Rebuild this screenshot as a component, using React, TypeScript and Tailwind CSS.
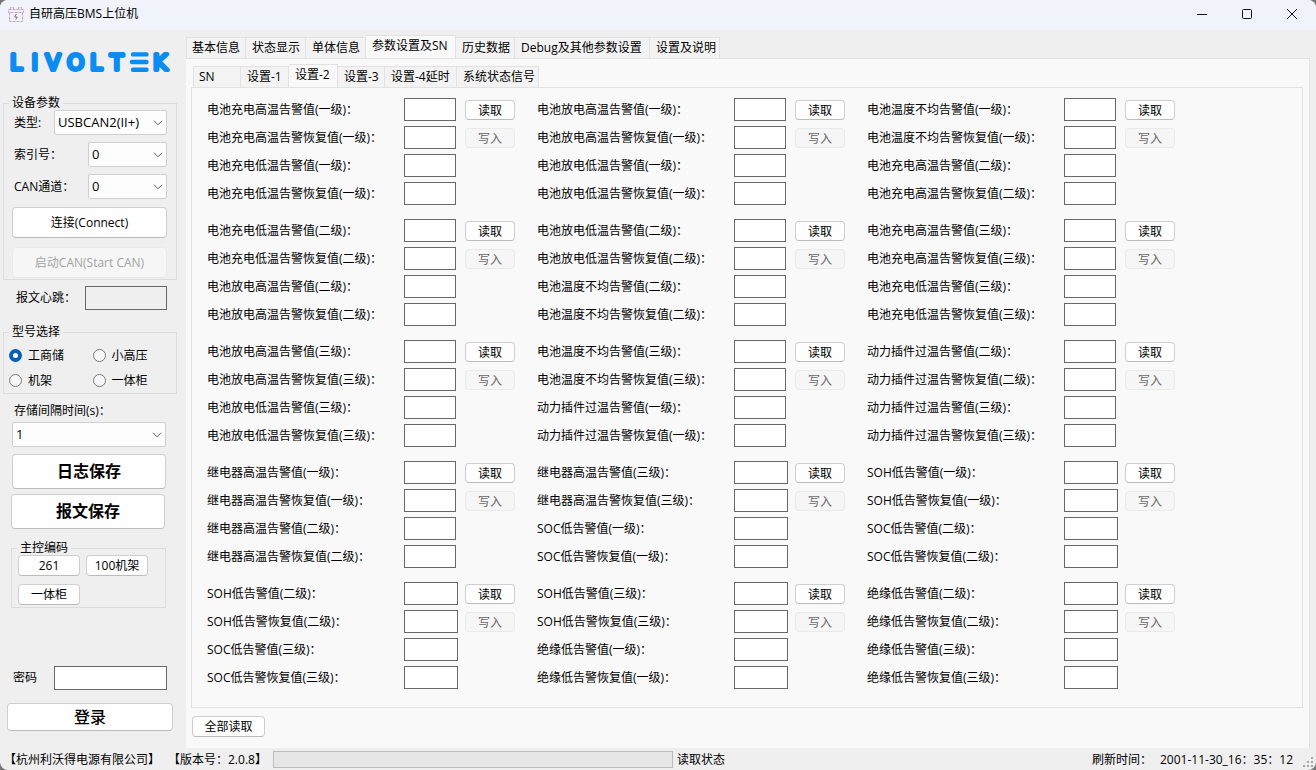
import { useId } from "react";
import type { ReactNode } from "react";

type Tab = { label: string; width: string };

const mainTabs: Tab[] = [
  { label: "基本信息", width: "w-[60px]" },
  { label: "状态显示", width: "w-[60px]" },
  { label: "单体信息", width: "w-[60px]" },
  { label: "参数设置及SN", width: "w-[90px]" },
  { label: "历史数据", width: "w-[59px]" },
  { label: "Debug及其他参数设置", width: "w-[135px]" },
  { label: "设置及说明", width: "w-[70px]" },
];

const subTabs: Tab[] = [
  { label: "SN", width: "w-[48px]" },
  { label: "设置-1", width: "w-[48px]" },
  { label: "设置-2", width: "w-[49px]" },
  { label: "设置-3", width: "w-[47px]" },
  { label: "设置-4延时", width: "w-[72px]" },
  { label: "系统状态信号", width: "w-[82px]" },
];

type Group = { rows: string[]; wide?: boolean };

const pair = (name: string, level: string) => [
  `${name}告警值(${level}级)：`,
  `${name}告警恢复值(${level}级)：`,
];

const groups: Group[] = [
  { rows: [...pair("电池充电高温", "一"), ...pair("电池充电低温", "一")] },
  { rows: [...pair("电池放电高温", "一"), ...pair("电池放电低温", "一")] },
  { rows: [...pair("电池温度不均", "一"), ...pair("电池充电高温", "二")] },
  { rows: [...pair("电池充电低温", "二"), ...pair("电池放电高温", "二")] },
  { rows: [...pair("电池放电低温", "二"), ...pair("电池温度不均", "二")] },
  { rows: [...pair("电池充电高温", "三"), ...pair("电池充电低温", "三")] },
  { rows: [...pair("电池放电高温", "三"), ...pair("电池放电低温", "三")] },
  { rows: [...pair("电池温度不均", "三"), ...pair("动力插件过温", "一")] },
  { rows: [...pair("动力插件过温", "二"), ...pair("动力插件过温", "三")] },
  { rows: [...pair("继电器高温", "一"), ...pair("继电器高温", "二")] },
  { rows: [...pair("继电器高温", "三"), ...pair("SOC低", "一")], wide: true },
  { rows: [...pair("SOH低", "一"), ...pair("SOC低", "二")], wide: true },
  { rows: [...pair("SOH低", "二"), ...pair("SOC低", "三")], wide: true },
  { rows: [...pair("SOH低", "三"), ...pair("绝缘低", "一")], wide: true },
  { rows: [...pair("绝缘低", "二"), ...pair("绝缘低", "三")], wide: true },
];

function Logo() {
  return (
    <svg role="img" aria-label="LIVOLTEK" viewBox="0 0 164 24" className="mt-[20px] ml-[8px] h-[24px] w-[164px] overflow-visible">
      <g fill="#0a8cf0" stroke="#0a8cf0">
        <text
          x="2 23.5 37.5 59 82 102 145"
          y="20"
          fontFamily="DejaVu Sans, sans-serif"
          fontSize="22"
          strokeWidth="3.8"
          strokeLinejoin="round"
        >
          LIVOLTK
        </text>
        <g strokeWidth="4.4" strokeLinecap="round">
          <path d="M125 4.4H138.5M124 12H138.5M125 19.7H138.5" />
        </g>
      </g>
    </svg>
  );
}

function AppIcon() {
  return (
    <svg viewBox="0 0 16 17" className="h-[17px] w-[16px]" fill="none" stroke="#c9a4bd" strokeWidth="1">
      <path d="M2.5 3.5V1.5H5.5V3.5M10.5 3.5V1.5H13.5V3.5M0.5 3.5H15.5V6.5H0.5ZM1.5 6.5V15.5H14.5V6.5" strokeDasharray="3 1" />
      <path d="M8.4 8L6.6 11H9.2L7.8 13.6" stroke="#6c5275" strokeWidth="0.8" />
    </svg>
  );
}

function TabStrip({ tabs, selected, label }: { tabs: Tab[]; selected: number; label: string }) {
  return (
    <div role="tablist" aria-label={label} className="flex items-end">
      {tabs.map((tab, i) => (
        <button
          key={tab.label}
          type="button"
          role="tab"
          aria-selected={i === selected}
          className={`shrink-0 border-t border-r border-[#e2e2e2] pl-[6px] text-left whitespace-nowrap first:border-l first:pl-[5px] ${tab.width} ${
            i === selected ? "-mb-px h-[24px] bg-[#f9f9f9] pb-[3px]" : "h-[21px] bg-[#f3f3f3]"
          }`}
        >
          {tab.label}
        </button>
      ))}
    </div>
  );
}

function Button({ children, className, disabled }: { children: ReactNode; className: string; disabled?: boolean }) {
  return (
    <button
      type="button"
      disabled={disabled}
      className={`rounded-[4px] border ${
        disabled ? "border-[#eaeaea] bg-[#f6f6f6]" : "border-[#cfcfcf] border-b-[#bcbcbc] bg-[#fefefe]"
      } ${className}`}
    >
      {children}
    </button>
  );
}

function Dropdown({ id, value, className }: { id: string; value: string; className: string }) {
  return (
    <div className={`relative ${className}`}>
      <select
        id={id}
        defaultValue={value}
        className="block h-[25px] w-full appearance-none rounded-[2px] border border-[#cfcfcf] bg-[#fdfdfd] pb-[2px] pl-[3px] text-[13px] leading-[20px]"
      >
        <option>{value}</option>
      </select>
      <svg viewBox="0 0 10 6" className="pointer-events-none absolute top-[10px] right-[4px] h-[6px] w-[10px]" fill="none" stroke="#555">
        <path d="M1 0.8L5 4.8L9 0.8" />
      </svg>
    </div>
  );
}

function Choice({ label, checked }: { label: string; checked?: boolean }) {
  return (
    <label className="flex h-[25px] items-center gap-[6px]">
      <input
        type="radio"
        name="model"
        defaultChecked={checked}
        className="size-[13px] appearance-none rounded-full border border-[#7a7a7a] bg-[#f6f6f6] checked:border-4 checked:border-[#0560b6] checked:bg-white"
      />
      {label}
    </label>
  );
}

function ParameterGroup({ rows, wide }: Group) {
  const base = useId();
  return (
    <div className="flex flex-col gap-[5px]">
      {rows.map((row, i) => (
        <div key={row} className="grid h-[23px] grid-cols-[197px_61px_50px] items-center">
          <label htmlFor={`${base}-${i}`}>{row}</label>
          <input
            id={`${base}-${i}`}
            type="text"
            className={`h-[23px] border border-[#686868] bg-white px-1 ${wide ? "w-[54px]" : "w-[52px]"}`}
          />
          {i === 0 && <Button className="h-[20px] pt-[2px]">读取</Button>}
          {i === 1 && (
            <Button disabled className="h-[20px] pt-[2px] text-[#686868]">
              写入
            </Button>
          )}
        </div>
      ))}
    </div>
  );
}

function Sidebar() {
  return (
    <aside className="flex w-[186px] shrink-0 flex-col">
      <Logo />
      <fieldset className="mt-[22px] mr-[9px] ml-[3px] flex h-[184px] flex-col border border-[#dcdcdc] pr-[9px] pl-[8px]">
        <legend className="ml-[-3px] px-[3px]">设备参数</legend>
        <div className="flex items-center">
          <label htmlFor="type" className="w-[42px] pl-[2px]">类型:</label>
          <Dropdown id="type" value="USBCAN2(II+)" className="flex-1" />
        </div>
        <div className="mt-[7px] flex items-center">
          <label htmlFor="index" className="w-[76px] pl-[2px]">索引号：</label>
          <Dropdown id="index" value="0" className="flex-1" />
        </div>
        <div className="mt-[7px] flex items-center">
          <label htmlFor="channel" className="w-[76px] pl-[2px]">CAN通道：</label>
          <Dropdown id="channel" value="0" className="flex-1" />
        </div>
        <Button className="mt-[8px] h-[31px] w-full shrink-0">连接(Connect)</Button>
        <Button disabled className="mt-[9px] h-[31px] w-full shrink-0 text-[#a3a3a3]">启动CAN(Start CAN)</Button>
      </fieldset>
      <div className="mt-[6px] flex items-center pr-[19px] pl-[16px]">
        <label htmlFor="heartbeat" className="w-[69px]">报文心跳：</label>
        <input id="heartbeat" readOnly className="h-[24px] min-w-0 flex-1 border border-[#686868] bg-[#efefef] px-1" />
      </div>
      <fieldset className="mt-[15px] mr-[9px] ml-[3px] h-[69px] border border-[#dcdcdc] pl-[5px]">
        <legend className="px-[3px]">型号选择</legend>
        <div className="mt-[4px] grid grid-cols-2">
          <Choice label="工商储" checked />
          <Choice label="小高压" />
          <Choice label="机架" />
          <Choice label="一体柜" />
        </div>
      </fieldset>
      <label htmlFor="interval" className="mt-[10px] ml-[14px]">存储间隔时间(s)：</label>
      <Dropdown id="interval" value="1" className="mt-[4px] mr-[20px] ml-[12px]" />
      <Button className="mt-[7px] mr-[20px] ml-[12px] h-[35px] pb-[2px] text-base font-bold">日志保存</Button>
      <Button className="mt-[5px] mr-[21px] ml-[11px] h-[35px] pb-[2px] text-base font-bold">报文保存</Button>
      <fieldset className="mt-[12px] mr-[20px] ml-[11px] h-[67px] border border-[#dcdcdc] pl-[6px]">
        <legend className="ml-[-1px] px-[3px]">主控编码</legend>
        <div className="flex flex-wrap gap-x-[6px] gap-y-[8px]">
          <Button className="h-[21px] w-[62px]">261</Button>
          <Button className="h-[21px] w-[62px]">100机架</Button>
          <Button className="h-[21px] w-[62px]">一体柜</Button>
        </div>
      </fieldset>
      <div className="mt-[58px] flex items-center pr-[19px] pl-[13px]">
        <label htmlFor="password" className="w-[41px]">密码</label>
        <input id="password" type="password" className="h-[24px] min-w-0 flex-1 border border-[#686868] bg-white px-1" />
      </div>
      <Button className="mt-[13px] mr-[13px] ml-[7px] h-[28px] text-base font-medium">登录</Button>
    </aside>
  );
}

export default function App() {
  return (
    <div className="min-h-screen bg-[#777777]">
      <div className="flex min-h-screen flex-col overflow-hidden rounded-[8px] bg-[#efefef] font-['Open_Sans','Noto_Sans_CJK_SC',sans-serif] text-[12px] leading-[14px] text-black">
        <header className="flex h-[30px] items-center bg-[#f0f3f9] pb-[2px] pl-[8px]">
          <AppIcon />
          <h1 className="ml-[5px] flex-1">自研高压BMS上位机</h1>
          <div className="mr-[2px] flex h-full">
            <button type="button" aria-label="最小化" className="flex w-[45px] items-center justify-center">
              <svg viewBox="0 0 12 12" className="size-[12px]" stroke="#111" fill="none"><path d="M1 6.5H11" /></svg>
            </button>
            <button type="button" aria-label="最大化" className="flex w-[45px] items-center justify-center">
              <svg viewBox="0 0 12 12" className="size-[12px]" stroke="#111" fill="none"><rect x="1.5" y="1.5" width="9" height="9" rx="1" /></svg>
            </button>
            <button type="button" aria-label="关闭" className="flex w-[45px] items-center justify-center">
              <svg viewBox="0 0 12 12" className="size-[12px]" stroke="#111" fill="none"><path d="M1 1L11 11M11 1L1 11" /></svg>
            </button>
          </div>
        </header>

        <div className="flex flex-1">
          <Sidebar />
          <main className="flex min-w-0 flex-1 flex-col pt-[5px] pr-[6px]">
            <TabStrip tabs={mainTabs} selected={3} label="主菜单" />
            <div className="flex flex-1 flex-col border-t border-r border-[#e2e2e2] bg-[#f9f9f9] pt-[5px] pr-[6px] pl-[5px]">
              <div className="pl-[2px]">
                <TabStrip tabs={subTabs} selected={2} label="参数设置" />
              </div>
              <section className="flex-1 border border-[#e2e2e2] px-[15px] pt-[10px]">
                <div className="grid grid-cols-[repeat(3,330px)] gap-y-[14px]">
                  {groups.map((group) => (
                    <ParameterGroup key={group.rows[0]} {...group} />
                  ))}
                </div>
              </section>
              <div className="pt-[8px] pb-[11px] pl-px">
                <Button className="h-[21px] w-[73px]">全部读取</Button>
              </div>
            </div>
          </main>
        </div>

        <footer className="flex h-[22px] items-center pt-px pl-[4px] whitespace-nowrap">
          <span className="w-[164px]">【杭州利沃得电源有限公司】</span>
          <span className="w-[105px]">【版本号：2.0.8】</span>
          <div role="progressbar" aria-label="读取状态" aria-valuenow={0} className="h-[17px] w-[400px] border border-[#bcbcbc] bg-[#e6e6e6]" />
          <span className="ml-[4px] flex-1">读取状态</span>
          <span className="w-[68px]">刷新时间：</span>
          <time className="w-[143px]">2001-11-30_16：35：12</time>
          <svg viewBox="0 0 12 12" className="mt-[6px] mr-px size-[12px]" fill="#a8a8a8">
            <path d="M8 0h2v2h-2zM4 4h2v2h-2zM8 4h2v2h-2zM0 8h2v2h-2zM4 8h2v2h-2zM8 8h2v2h-2z" />
          </svg>
        </footer>
      </div>
    </div>
  );
}
